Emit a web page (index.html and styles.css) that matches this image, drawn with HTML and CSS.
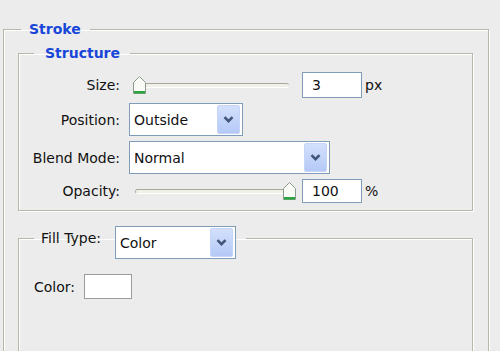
FILE: index.html
```html
<!DOCTYPE html>
<html lang="en">
<head>
    <meta charset="UTF-8">
    <title>Stroke</title>
    <link rel="stylesheet" href="styles.css">
</head>
<body>
    <fieldset class="group stroke">
        <legend class="title">Stroke</legend>

        <!-- Structure block -->
        <fieldset class="group structure">
            <legend class="title">Structure</legend>
            <div class="rows">
                <label class="lbl">Size:</label>
                <div class="ctrl">
                    <div class="slider">
                        <div class="track"></div>
                        <svg class="thumb thumb-left" width="13" height="18" viewBox="0 0 13 18">
                            <path d="M0.5 6.5 L6.5 0.5 L12.5 6.5 V17.5 H0.5 Z" fill="#fafaf6" stroke="#8c9c8c"/>
                            <rect x="1" y="15" width="11" height="2.5" fill="#2aa640"/>
                        </svg>
                    </div>
                    <div class="num">3</div>
                    <span class="unit">px</span>
                </div>

                <label class="lbl">Position:</label>
                <div class="ctrl">
                    <div class="select sel-pos">
                        <span class="val">Outside</span>
                        <span class="drop"><svg width="11" height="7" viewBox="0 0 11 7"><path d="M1.5 1.2 L5.5 5.2 L9.5 1.2" fill="none" stroke="#43557a" stroke-width="2.6"/></svg></span>
                    </div>
                </div>

                <label class="lbl">Blend Mode:</label>
                <div class="ctrl">
                    <div class="select sel-blend">
                        <span class="val">Normal</span>
                        <span class="drop"><svg width="11" height="7" viewBox="0 0 11 7"><path d="M1.5 1.2 L5.5 5.2 L9.5 1.2" fill="none" stroke="#43557a" stroke-width="2.6"/></svg></span>
                    </div>
                </div>

                <label class="lbl">Opacity:</label>
                <div class="ctrl">
                    <div class="slider">
                        <div class="track"></div>
                        <svg class="thumb thumb-right" width="13" height="18" viewBox="0 0 13 18">
                            <path d="M0.5 6.5 L6.5 0.5 L12.5 6.5 V17.5 H0.5 Z" fill="#fafaf6" stroke="#8c9c8c"/>
                            <rect x="1" y="15" width="11" height="2.5" fill="#2aa640"/>
                        </svg>
                    </div>
                    <div class="num short">100</div>
                    <span class="unit">%</span>
                </div>
            </div>
        </fieldset>

        <!-- Fill block -->
        <fieldset class="group fill">
            <legend class="fill-legend">
                <span class="lbl fill-lbl">Fill Type:</span>
                <div class="select sel-fill">
                    <span class="val">Color</span>
                    <span class="drop"><svg width="11" height="7" viewBox="0 0 11 7"><path d="M1.5 1.2 L5.5 5.2 L9.5 1.2" fill="none" stroke="#43557a" stroke-width="2.6"/></svg></span>
                </div>
            </legend>
            <div class="color-row">
                <span class="lbl">Color:</span>
                <div class="swatch"></div>
            </div>
        </fieldset>
    </fieldset>
</body>
</html>
```

FILE: styles.css
```css
/* Reset */
* {
    box-sizing: border-box;
}

body {
    margin: 0;
    height: 351px;
    overflow: hidden;
    background-color: #ececec;
    font-family: "DejaVu Sans", Verdana, sans-serif;
    font-size: 14px;
    color: #111;
}

/* Etched group boxes */
.group {
    margin: 0;
    border: 1px solid #b9b5a8;
    box-shadow: inset 1px 1px 0 #fff, 1px 1px 0 #fff;
    min-width: 0;
}

.title {
    font-weight: bold;
    color: #1846d8;
    line-height: 16px;
    padding: 0 8px;
}

.stroke {
    margin: 21px 11px 0 3px;
    padding: 8px 15px 0 14px;
    height: 420px;
}

.stroke > .title {
    margin-left: 3px;
    padding: 0 9px 0 8px;
}

.structure {
    margin: 0 0 15px;
    padding: 11px 0 7px;
}

.structure > .title {
    margin-left: 15px;
    padding: 0 10px 0 11px;
}

/* Rows */
.rows {
    display: grid;
    grid-template-columns: 101px 1fr;
    grid-template-rows: 26px 33px 33px 24px;
    column-gap: 9px;
    row-gap: 5px;
}

.lbl {
    text-align: right;
    align-self: center;
    white-space: nowrap;
}

.ctrl {
    display: flex;
    align-items: center;
}

/* Slider */
.slider {
    position: relative;
    width: 163px;
    height: 18px;
    margin-left: 4px;
    display: flex;
    align-items: center;
}

.track {
    flex: 1;
    height: 5px;
    margin: 0 7px 0 2px;
    border-radius: 3px;
    border-top: 1px solid #a9a89e;
    border-left: 1px solid #b4b3aa;
    border-bottom: 1px solid #fff;
    background: #f1f0e8;
}

.thumb {
    position: absolute;
    top: 0;
}

.thumb-left {
    left: 0;
}

.thumb-right {
    right: 0;
}

/* Number input */
.num {
    width: 60px;
    height: 26px;
    margin-left: 6px;
    padding-left: 9px;
    border: 1px solid #7f9db9;
    background: #fff;
    line-height: 24px;
}

.num.short {
    height: 24px;
    line-height: 22px;
}

.unit {
    margin-left: 3px;
}

/* Combo box */
.select {
    display: flex;
    align-items: center;
    height: 33px;
    padding: 0 2px 0 4px;
    border: 1px solid #7f9db9;
    background: #fff;
}

.select .val {
    flex: 1;
}

.drop {
    width: 23px;
    height: 29px;
    display: flex;
    align-items: center;
    justify-content: center;
    border: 1px solid #c6d5f7;
    border-radius: 2px;
    background: linear-gradient(#d3e0fc, #b4c9f6);
}

.sel-pos {
    width: 114px;
}

.sel-blend {
    width: 201px;
}

.sel-fill {
    width: 121px;
}

/* Fill block */
.fill {
    padding: 24px 0 0 15px;
    height: 200px;
}

.fill-legend {
    display: flex;
    align-items: flex-start;
    height: 24px;
    padding: 0 10px 0 7px;
}

.fill-lbl {
    line-height: 28px;
    margin-right: 14px;
}

.color-row {
    display: flex;
    align-items: center;
    gap: 9px;
}

.swatch {
    width: 48px;
    height: 25px;
    border: 1px solid #9c9c98;
    background: #fff;
}
```
